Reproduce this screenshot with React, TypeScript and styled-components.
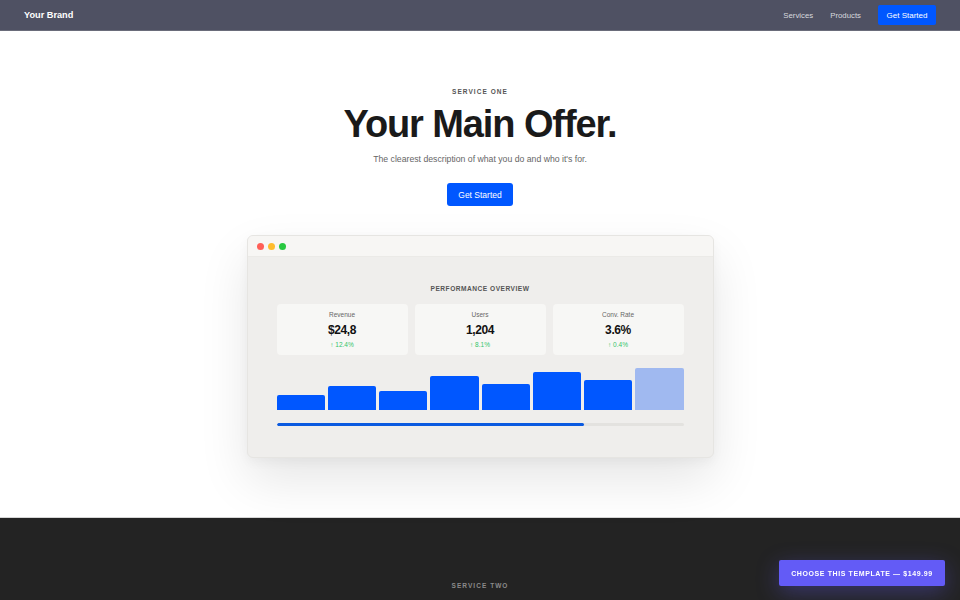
import React from "react";
import styled, { createGlobalStyle } from "styled-components";

const GlobalStyle = createGlobalStyle`
  * {
    box-sizing: border-box;
  }
  body {
    margin: 0;
    font-family: "Liberation Sans", Arial, sans-serif;
    background: #ffffff;
    color: #1a1a1a;
  }
`;

interface Stat {
  label: string;
  value: string;
  change: string;
}

const stats: Stat[] = [
  { label: "Revenue", value: "$24,8", change: "↑ 12.4%" },
  { label: "Users", value: "1,204", change: "↑ 8.1%" },
  { label: "Conv. Rate", value: "3.6%", change: "↑ 0.4%" },
];

const bars = [36, 57, 45, 81, 62, 90, 71, 100];

const App: React.FC = (): JSX.Element => {
  return (
    <>
      <GlobalStyle />
      <Nav>
        <Brand>Your Brand</Brand>
        <NavLinks>
          <NavLink>Services</NavLink>
          <NavLink>Products</NavLink>
          <NavButton>Get Started</NavButton>
        </NavLinks>
      </Nav>

      <Hero>
        <Eyebrow>Service One</Eyebrow>
        <Headline>Your Main Offer.</Headline>
        <Subtitle>The clearest description of what you do and who it's for.</Subtitle>
        <CtaButton>Get Started</CtaButton>

        <MockWindow>
          <TitleBar>
            <Dot color="#ff5f57" />
            <Dot color="#febc2e" />
            <Dot color="#28c840" />
          </TitleBar>
          <WindowBody>
            <PanelTitle>Performance Overview</PanelTitle>
            <CardRow>
              {stats.map((s) => (
                <StatCard key={s.label}>
                  <StatLabel>{s.label}</StatLabel>
                  <StatValue>{s.value}</StatValue>
                  <StatChange>{s.change}</StatChange>
                </StatCard>
              ))}
            </CardRow>
            <BarChart>
              {bars.map((h, i) => (
                <Bar
                  key={i}
                  faded={i === bars.length - 1}
                  style={{ height: `${h}%` }}
                />
              ))}
            </BarChart>
            <Track>
              <TrackFill style={{ width: "75.5%" }} />
            </Track>
          </WindowBody>
        </MockWindow>
      </Hero>

      <DarkSection>
        <Eyebrow dark>Service Two</Eyebrow>
      </DarkSection>

      <FloatingButton>Choose This Template — $149.99</FloatingButton>
    </>
  );
};

const Nav = styled.nav`
  display: flex;
  align-items: center;
  justify-content: space-between;
  height: 31px;
  padding: 0 24px;
  background-color: #4f5163;
  border-bottom: 1px solid #6a6c7a;
`;

const Brand = styled.div`
  color: #ffffff;
  font-size: 9.2px;
  font-weight: bold;
`;

const NavLinks = styled.div`
  display: flex;
  align-items: center;
  gap: 17px;
`;

const NavLink = styled.a`
  color: #d8d9de;
  font-size: 7.8px;
  cursor: pointer;
`;

const NavButton = styled.button`
  border: none;
  background-color: #0057ff;
  color: #ffffff;
  font-family: inherit;
  font-size: 8px;
  height: 20px;
  width: 58px;
  padding: 0;
  border-radius: 2px;
`;

const Hero = styled.section`
  display: flex;
  flex-direction: column;
  align-items: center;
  padding: 56px 0 59px;
  background: #ffffff;
`;

const Eyebrow = styled.div<{ dark?: boolean }>`
  font-size: 6.5px;
  line-height: 10px;
  font-weight: bold;
  letter-spacing: 1.05px;
  text-transform: uppercase;
  color: ${(p) => (p.dark ? "#8a8a8a" : "#555555")};
`;

const Headline = styled.h1`
  margin: 6px 0 0;
  font-size: 38px;
  line-height: 42px;
  font-weight: bold;
  letter-spacing: -1.1px;
  color: #1a1a1a;
`;

const Subtitle = styled.p`
  margin: 7px 0 0;
  font-size: 8.7px;
  line-height: 14px;
  color: #666666;
`;

const CtaButton = styled.button`
  margin-top: 17px;
  width: 66px;
  height: 23px;
  padding: 0;
  border: none;
  border-radius: 3px;
  background-color: #0057ff;
  color: #ffffff;
  font-family: inherit;
  font-size: 8.5px;
`;

const MockWindow = styled.div`
  margin-top: 29px;
  width: 467px;
  border: 1px solid #e6e5e2;
  border-radius: 6px;
  overflow: hidden;
  background: #efeeec;
  box-shadow: 0 22px 50px rgba(0, 0, 0, 0.1), 0 4px 12px rgba(0, 0, 0, 0.04);
`;

const TitleBar = styled.div`
  display: flex;
  align-items: center;
  gap: 4px;
  height: 21px;
  padding: 0 9px;
  background: #f7f6f4;
  border-bottom: 1px solid #ebeae7;
`;

const Dot = styled.span<{ color: string }>`
  width: 7px;
  height: 7px;
  border-radius: 50%;
  background: ${(p) => p.color};
`;

const WindowBody = styled.div`
  display: flex;
  flex-direction: column;
  padding: 27px 29px 31px;
`;

const PanelTitle = styled.div`
  text-align: center;
  font-size: 6.6px;
  line-height: 10px;
  font-weight: bold;
  letter-spacing: 0.5px;
  text-transform: uppercase;
  color: #555555;
`;

const CardRow = styled.div`
  display: grid;
  grid-template-columns: repeat(3, 1fr);
  gap: 7px;
  margin-top: 10px;
`;

const StatCard = styled.div`
  display: flex;
  flex-direction: column;
  align-items: center;
  height: 51px;
  padding-top: 6px;
  background: #f7f7f5;
  border-radius: 4px;
`;

const StatLabel = styled.div`
  font-size: 6.5px;
  line-height: 9px;
  color: #666666;
`;

const StatValue = styled.div`
  margin-top: 4px;
  font-size: 12px;
  line-height: 15px;
  font-weight: bold;
  letter-spacing: -0.4px;
  color: #111111;
`;

const StatChange = styled.div`
  margin-top: 2px;
  font-size: 6.5px;
  line-height: 9px;
  color: #34c46a;
`;

const BarChart = styled.div`
  display: flex;
  align-items: flex-end;
  gap: 3px;
  height: 42px;
  margin-top: 13px;
`;

const Bar = styled.div<{ faded?: boolean }>`
  flex: 1;
  border-radius: 2px 2px 0 0;
  background: ${(p) => (p.faded ? "#a0b9f0" : "#0057ff")};
`;

const Track = styled.div`
  margin-top: 13px;
  height: 3px;
  border-radius: 2px;
  background: #e3e2df;
  overflow: hidden;
`;

const TrackFill = styled.div`
  height: 100%;
  border-radius: 2px;
  background: #0a5ae0;
`;

const DarkSection = styled.section`
  display: flex;
  flex-direction: column;
  align-items: center;
  min-height: 420px;
  padding-top: 63px;
  background: #232323;
  border-top: 1px solid #d6d6d6;
`;

const FloatingButton = styled.button`
  position: fixed;
  right: 15px;
  bottom: 14px;
  width: 166px;
  height: 26px;
  padding: 0;
  border: none;
  border-radius: 2px;
  background: #635bf6;
  color: #ffffff;
  font-family: inherit;
  font-size: 7px;
  font-weight: bold;
  letter-spacing: 0.6px;
  text-transform: uppercase;
  box-shadow: 0 6px 22px rgba(99, 91, 246, 0.35);
`;

export default App;
